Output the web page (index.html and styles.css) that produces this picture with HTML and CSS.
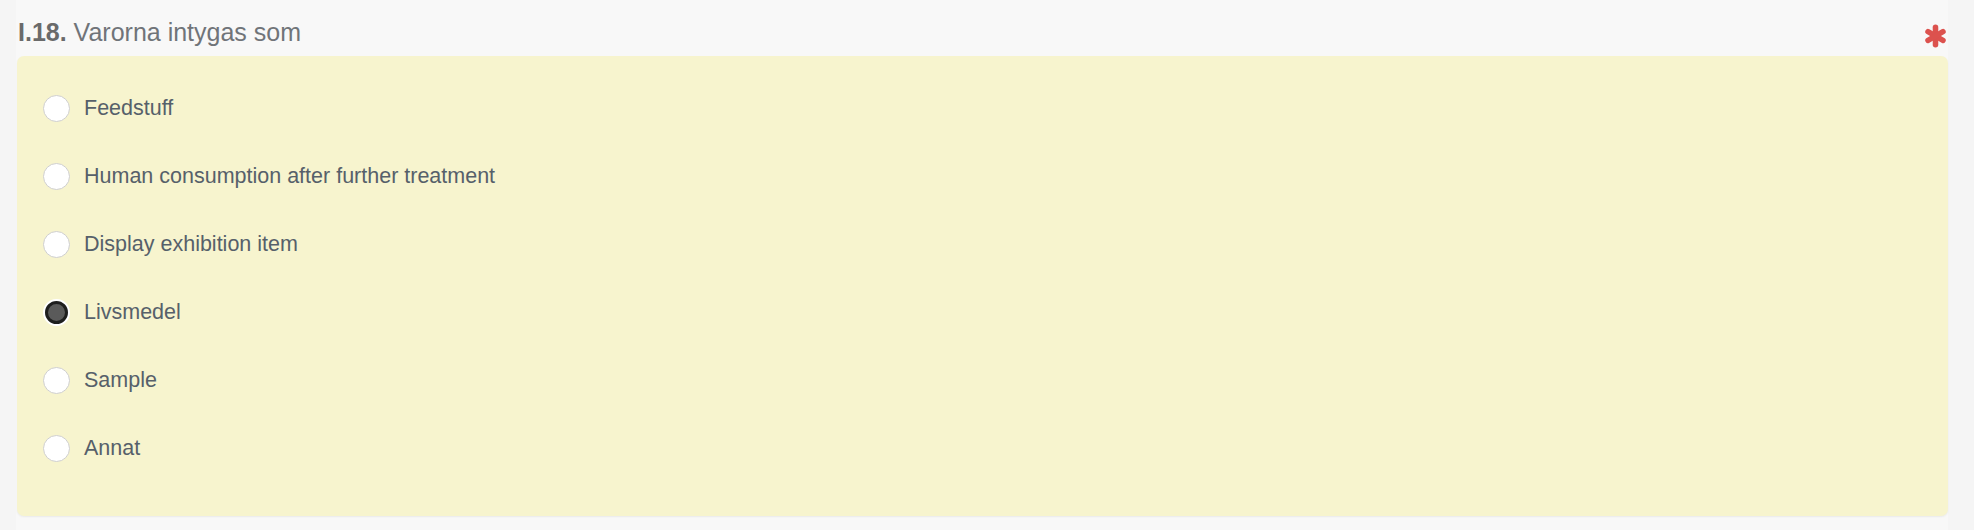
FILE: index.html
```html
<!DOCTYPE html>
<html>
<head>
<meta charset="utf-8">
<link rel="stylesheet" href="styles.css">
</head>
<body>
<div class="panel">
  <div class="header">
    <h2 class="title"><span class="num">I.18.</span> Varorna intygas som</h2>
    <svg class="req" viewBox="0 0 24 24" width="23" height="24" aria-hidden="true">
      <g stroke="#dc524e" stroke-width="5.8" stroke-linecap="round">
        <line x1="12" y1="3" x2="12" y2="21"/>
        <line x1="4.2" y1="7.5" x2="19.8" y2="16.5"/>
        <line x1="4.2" y1="16.5" x2="19.8" y2="7.5"/>
      </g>
    </svg>
  </div>
  <div class="box">
    <label class="opt"><span class="radio"></span><span class="lbl">Feedstuff</span></label>
    <label class="opt"><span class="radio"></span><span class="lbl">Human consumption after further treatment</span></label>
    <label class="opt"><span class="radio"></span><span class="lbl">Display exhibition item</span></label>
    <label class="opt"><span class="radio checked"></span><span class="lbl">Livsmedel</span></label>
    <label class="opt"><span class="radio"></span><span class="lbl">Sample</span></label>
    <label class="opt"><span class="radio"></span><span class="lbl">Annat</span></label>
  </div>
</div>
</body>
</html>
```

FILE: styles.css
```css
html, body {
  margin: 0;
  padding: 0;
  background: #f5f5f5;
  font-family: "Liberation Sans", Arial, sans-serif;
}
.panel {
  margin-left: 16px;
  width: 1932px;
  height: 530px;
  background: #f8f8f8;
  padding-left: 1px;
  box-sizing: border-box;
}
.header {
  height: 56px;
  display: flex;
  align-items: flex-start;
  justify-content: space-between;
  box-sizing: border-box;
}
.title {
  margin: 0;
  padding: 17px 0 0 1px;
  font-size: 25px;
  font-weight: normal;
  line-height: 30px;
  color: #707479;
}
.num {
  font-weight: bold;
  color: #6a6a6a;
}
.req {
  margin-top: 24px;
  margin-right: 1px;
}
.box {
  background: #f7f4ce;
  border-radius: 7px;
  height: 460px;
  box-sizing: border-box;
  padding: 18px 0 0 26px;
  box-shadow: 0 1px 2px rgba(0,0,0,0.06);
  display: flex;
  flex-direction: column;
}
.opt {
  height: 68px;
  display: flex;
  align-items: center;
}
.radio {
  width: 27px;
  height: 27px;
  border-radius: 50%;
  background: #fff;
  border: 1px solid #cfcfcf;
  box-sizing: border-box;
  flex: none;
}
.radio.checked {
  border: 2px solid #fff;
  background: #fff;
  position: relative;
}
.radio.checked::after {
  content: "";
  position: absolute;
  inset: 0;
  border-radius: 50%;
  border: 3px solid #1e1e1e;
  background: #5a5a5a;
  box-sizing: border-box;
}
.lbl {
  margin-left: 14px;
  font-size: 21.5px;
  color: #56606a;
}
```
